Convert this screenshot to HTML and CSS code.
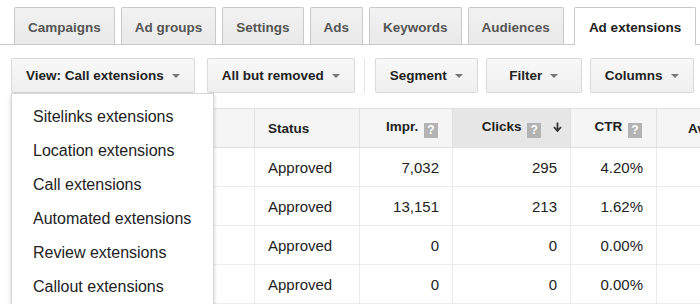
FILE: index.html
```html
<!DOCTYPE html>
<html lang="en">
<head>
    <meta charset="UTF-8">
    <meta name="viewport" content="width=device-width, initial-scale=1.0">
    <title>Ad extensions</title>
    <link rel="stylesheet" href="styles.css">
</head>
<body>
    <div class="tabs">
        <div class="tab">Campaigns</div>
        <div class="tab">Ad groups</div>
        <div class="tab">Settings</div>
        <div class="tab">Ads</div>
        <div class="tab">Keywords</div>
        <div class="tab">Audiences</div>
        <div class="tab active">Ad extensions</div>
    </div>

    <div class="toolbar">
        <div class="btn view-btn">View: Call extensions <span class="caret"></span></div>
        <div class="btn removed-btn">All but removed <span class="caret"></span></div>
        <div class="sep"></div>
        <div class="btn">Segment <span class="caret"></span></div>
        <div class="btn filter-btn">Filter <span class="caret"></span></div>
        <div class="btn">Columns <span class="caret"></span></div>

        <ul class="menu">
            <li>Sitelinks extensions</li>
            <li>Location extensions</li>
            <li>Call extensions</li>
            <li>Automated extensions</li>
            <li>Review extensions</li>
            <li>Callout extensions</li>
        </ul>
    </div>

    <table class="grid">
        <colgroup>
            <col class="c-name">
            <col class="c-status">
            <col class="c-impr">
            <col class="c-clicks">
            <col class="c-ctr">
            <col class="c-avg">
        </colgroup>
        <thead>
            <tr>
                <th></th>
                <th class="left">Status</th>
                <th>Impr. <span class="help">?</span></th>
                <th class="sorted">Clicks <span class="help">?</span>
                    <svg class="sort" width="9" height="10" viewBox="0 0 9 10"><path d="M4.5 0.5v7M1 5l3.5 4L8 5" fill="none" stroke="#333" stroke-width="1.8"/></svg>
                </th>
                <th>CTR <span class="help">?</span></th>
                <th class="left avg">Avg. CPC</th>
            </tr>
        </thead>
        <tbody>
            <tr><td></td><td class="left">Approved</td><td>7,032</td><td>295</td><td>4.20%</td><td></td></tr>
            <tr><td></td><td class="left">Approved</td><td>13,151</td><td>213</td><td>1.62%</td><td></td></tr>
            <tr><td></td><td class="left">Approved</td><td>0</td><td>0</td><td>0.00%</td><td></td></tr>
            <tr><td></td><td class="left">Approved</td><td>0</td><td>0</td><td>0.00%</td><td></td></tr>
        </tbody>
    </table>
</body>
</html>
```

FILE: styles.css
```css
body {
    margin: 0;
    background: #fff;
    font-family: "Liberation Sans", Arial, sans-serif;
    color: #222;
    overflow: hidden;
}

/* tabs */
.tabs {
    display: flex;
    gap: 6px;
    padding: 7px 0 0 14px;
    border-bottom: 1px solid #c9c9c9;
}

.tab {
    flex-shrink: 0;
    height: 33px;
    line-height: 33px;
    padding: 3px 13px 0;
    margin-bottom: -1px;
    border: 1px solid #c9c9c9;
    border-bottom: none;
    background: linear-gradient(#f2f2f2, #e9e9e9);
    color: #555;
    font-size: 13.5px;
    font-weight: bold;
    white-space: nowrap;
    border-radius: 2px 2px 0 0;
}

.tab.active {
    height: 34px;
    background: #fff;
    color: #222;
    padding: 3px 14px 0;
    margin-left: 4px;
}

/* toolbar */
.toolbar {
    position: relative;
    display: flex;
    align-items: center;
    padding: 13px 0 0 11px;
}

.btn {
    flex-shrink: 0;
    display: flex;
    align-items: center;
    justify-content: center;
    height: 33px;
    padding: 0 14px;
    margin-right: 8px;
    border: 1px solid #d9d9d9;
    border-radius: 2px;
    background: linear-gradient(#f8f8f8, #efefef);
    color: #222;
    font-size: 13.5px;
    font-weight: bold;
    white-space: nowrap;
}

.view-btn {
    margin-right: 12px;
}

.filter-btn {
    width: 66px;
}

.caret {
    display: inline-block;
    margin-left: 8px;
    border-left: 4px solid transparent;
    border-right: 4px solid transparent;
    border-top: 4px solid #777;
}

.sep {
    flex-shrink: 0;
    width: 1px;
    height: 35px;
    background: #e6e6e6;
    margin: 0 10px 0 1px;
}

.menu {
    position: absolute;
    top: 48px;
    left: 11px;
    width: 201px;
    margin: 0;
    padding: 6px 0 0;
    list-style: none;
    background: #fff;
    border: 1px solid #d6d6d6;
    box-shadow: 0 2px 4px rgba(0, 0, 0, 0.2);
    z-index: 2;
}

.menu li {
    height: 34px;
    line-height: 34px;
    padding-left: 21px;
    font-size: 16px;
    color: #222;
}

/* table */
.grid {
    margin: 15px 0 0 11px;
    width: 770px;
    table-layout: fixed;
    border-collapse: collapse;
}

.c-name { width: 243px; }
.c-status { width: 105px; }
.c-impr { width: 93px; }
.c-clicks { width: 118px; }
.c-ctr { width: 86px; }
.c-avg { width: 125px; }

th, td {
    height: 38px;
    padding: 0 13px 0 13px;
    text-align: right;
    white-space: nowrap;
    overflow: hidden;
}

th {
    background: #f5f5f5;
    border: 1px solid #e0e0e0;
    font-size: 13.5px;
    font-weight: bold;
    color: #222;
    padding-right: 14px;
}

th.sorted {
    background: #e6e6e6;
    padding-right: 8px;
}

th.avg {
    padding-left: 31px;
}

td {
    border: 1px solid #ececec;
    font-size: 15px;
}

.left {
    text-align: left;
}

.help {
    display: inline-block;
    width: 14px;
    height: 15px;
    line-height: 15px;
    margin-left: 2px;
    background: #b3b3b3;
    color: #fff;
    font-size: 12px;
    text-align: center;
    vertical-align: -3px;
}

.sort {
    margin-left: 8px;
    vertical-align: -1px;
}
```
